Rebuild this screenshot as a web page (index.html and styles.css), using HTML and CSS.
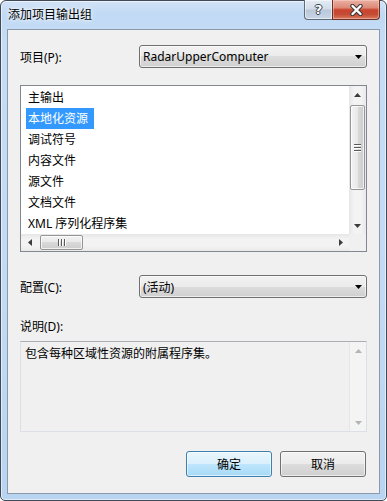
FILE: index.html
```html
<!DOCTYPE html>
<html lang="zh-CN">
<head>
    <meta charset="UTF-8">
    <meta name="viewport" content="width=device-width, initial-scale=1.0">
    <title>添加项目输出组</title>
    <link rel="stylesheet" href="styles.css">
</head>
<body>
    <div class="window">
        <div class="titlebar">
            <div class="title">添加项目输出组</div>
            <div class="caption">
                <div class="cap help"><span>?</span></div>
                <div class="cap close">
                    <svg width="13" height="12" viewBox="0 0 13 12">
                        <path d="M2.5 2 L10.5 10 M10.5 2 L2.5 10" stroke="#3b3b3b" stroke-width="4.4" stroke-linecap="round"/>
                        <path d="M2.5 2 L10.5 10 M10.5 2 L2.5 10" stroke="#fff" stroke-width="2.4" stroke-linecap="round"/>
                    </svg>
                </div>
            </div>
        </div>

        <div class="client">
            <div class="row">
                <div class="label">项目(P):</div>
                <div class="combo">
                    <span>RadarUpperComputer</span>
                    <svg width="7" height="4" viewBox="0 0 7 4"><path d="M0 0H7L3.5 4Z" fill="#000"/></svg>
                </div>
            </div>

            <div class="listbox">
                <ul class="items">
                    <li><span>主输出</span></li>
                    <li><span class="selected">本地化资源</span></li>
                    <li><span>调试符号</span></li>
                    <li><span>内容文件</span></li>
                    <li><span>源文件</span></li>
                    <li><span>文档文件</span></li>
                    <li><span>XML 序列化程序集</span></li>
                </ul>
                <div class="vscroll">
                    <div class="sbtn"><svg width="7" height="4" viewBox="0 0 7 4"><path d="M0 4H7L3.5 0Z" fill="#3c3c3c"/></svg></div>
                    <div class="vthumb"><i></i><i></i><i></i></div>
                    <div class="spacer"></div>
                    <div class="sbtn"><svg width="7" height="4" viewBox="0 0 7 4"><path d="M0 0H7L3.5 4Z" fill="#3c3c3c"/></svg></div>
                </div>
                <div class="hscroll">
                    <div class="sbtn"><svg width="4" height="7" viewBox="0 0 4 7"><path d="M4 0V7L0 3.5Z" fill="#3c3c3c"/></svg></div>
                    <div class="hthumb"><i></i><i></i><i></i></div>
                    <div class="spacer"></div>
                    <div class="sbtn"><svg width="4" height="7" viewBox="0 0 4 7"><path d="M0 0V7L4 3.5Z" fill="#3c3c3c"/></svg></div>
                </div>
                <div class="corner"></div>
            </div>

            <div class="row row-config">
                <div class="label">配置(C):</div>
                <div class="combo">
                    <span>(活动)</span>
                    <svg width="7" height="4" viewBox="0 0 7 4"><path d="M0 0H7L3.5 4Z" fill="#000"/></svg>
                </div>
            </div>

            <div class="label desc-label">说明(D):</div>
            <div class="descbox">
                <div class="desc-text">包含每种区域性资源的附属程序集。</div>
                <div class="vscroll disabled">
                    <div class="sbtn"><svg width="7" height="4" viewBox="0 0 7 4"><path d="M0 4H7L3.5 0Z" fill="#b4b4b4"/></svg></div>
                    <div class="spacer"></div>
                    <div class="sbtn"><svg width="7" height="4" viewBox="0 0 7 4"><path d="M0 0H7L3.5 4Z" fill="#b4b4b4"/></svg></div>
                </div>
            </div>

            <div class="buttons">
                <button class="btn default">确定</button>
                <button class="btn">取消</button>
            </div>
        </div>
    </div>
</body>
</html>
```

FILE: styles.css
```css
* {
    box-sizing: border-box;
}

body {
    margin: 0;
    background: #ffffff;
    font-family: "Noto Sans", "Noto Sans CJK SC", sans-serif;
    font-size: 12px;
    color: #000;
}

.window {
    width: 387px;
    height: 501px;
    border: 1px solid #3f4a56;
    border-radius: 6px 6px 5px 5px;
    background: linear-gradient(#d2e3f6 0, #c0d9f4 14px, #c6ddf6 40px, #c2daf4 300px, #b9d4f1 100%);
    box-shadow: inset 0 0 0 1px rgba(255, 255, 255, 0.55);
    padding: 0 6px 6px;
    display: flex;
    flex-direction: column;
}

/* title bar */
.titlebar {
    height: 28px;
    display: flex;
    align-items: flex-start;
}
.title {
    padding: 6px 0 0 1px;
    line-height: 16px;
    text-shadow: 0 0 6px #fff, 0 0 3px #fff;
}
.caption {
    display: flex;
    margin: -1px 0 0 auto;
}
.cap {
    height: 20px;
    display: flex;
    align-items: center;
    justify-content: center;
    border: 1px solid #5e6b7b;
    border-top: none;
}
.help {
    width: 28px;
    border-radius: 0 0 0 4px;
    border-right: none;
    background: linear-gradient(#e4ebf3, #d3dde9 45%, #bac8d9 55%, #c8d6e6);
    box-shadow: inset 0 0 0 1px rgba(255, 255, 255, 0.5);
}
.help span {
    font-family: "DejaVu Sans", sans-serif;
    font-weight: bold;
    font-size: 13px;
    line-height: 1;
    color: #fff;
    text-shadow: 1px 0 #34404e, -1px 0 #34404e, 0 1px #34404e, 0 -1px #34404e;
}
.close {
    width: 48px;
    border-radius: 0 0 4px 0;
    border-color: #6b3026;
    background: linear-gradient(#eab1a4, #de8a78 40%, #c8452f 52%, #c54a33 75%, #d8795f);
    box-shadow: inset 0 0 0 1px rgba(255, 220, 210, 0.45);
}

/* client area */
.client {
    flex: 1;
    border: 1px solid #8b9aab;
    background: #f0f0f0;
    padding: 15px 12px 16px 12px;
    display: flex;
    flex-direction: column;
}

.row {
    display: grid;
    grid-template-columns: 119px 1fr;
    align-items: center;
}
.row-config {
    margin-top: 23px;
}
.label {
    line-height: 16px;
    padding: 2px 0 0 0;
}

.combo {
    height: 23px;
    border: 1px solid #707070;
    border-radius: 3px;
    background: linear-gradient(#f2f2f2, #ebebeb 50%, #dddddd 50%, #cfcfcf);
    box-shadow: inset 0 0 0 1px rgba(255, 255, 255, 0.6);
    display: flex;
    align-items: center;
    justify-content: space-between;
    padding: 0 4px 0 3px;
}

/* list box */
.listbox {
    margin-top: 17px;
    height: 167px;
    border: 1px solid #828790;
    background: #fff;
    display: grid;
    grid-template-columns: 1fr 17px;
    grid-template-rows: 1fr 17px;
}
.items {
    list-style: none;
    margin: 0;
    padding: 1px 0 0 5px;
    overflow: hidden;
}
.items li {
    height: 21px;
    line-height: 21px;
    white-space: nowrap;
}
.items span {
    display: inline-block;
    padding: 0 6px 0 2px;
}
.items .selected {
    background: #3399ff;
    color: #fff;
}

.vscroll {
    display: flex;
    flex-direction: column;
    background: linear-gradient(90deg, #e6e6e6, #f3f3f3 30%, #f3f3f3 70%, #e9e9e9);
}
.hscroll {
    display: flex;
    background: linear-gradient(#e6e6e6, #f3f3f3 30%, #f3f3f3 70%, #e9e9e9);
}
.sbtn {
    width: 17px;
    height: 17px;
    flex: none;
    display: flex;
    align-items: center;
    justify-content: center;
}
.spacer {
    flex: 1;
}
.vthumb,
.hthumb {
    border: 1px solid #959595;
    border-radius: 2px;
    box-shadow: inset 0 0 0 1px rgba(255, 255, 255, 0.7);
    display: flex;
    align-items: center;
    justify-content: center;
    gap: 1px;
}
.vthumb {
    height: 85px;
    margin: 2px 1px 0 1px;
    flex-direction: column;
    background: linear-gradient(90deg, #f3f3f3, #e8e8e8 50%, #d9d9d9 50%, #cdcdcd);
}
.vthumb i {
    width: 7px;
    height: 1px;
    background: #5a5a5a;
    box-shadow: 0 1px #fff;
    margin-bottom: 1px;
}
.hthumb {
    width: 43px;
    margin: 1px 0 1px 2px;
    background: linear-gradient(#f3f3f3, #e8e8e8 50%, #d9d9d9 50%, #cdcdcd);
}
.hthumb i {
    width: 1px;
    height: 7px;
    background: #5a5a5a;
    box-shadow: 1px 0 #fff;
    margin-right: 1px;
}
.corner {
    background: #f0f0f0;
}

/* description */
.desc-label {
    margin-top: 21px;
    padding: 0;
}
.descbox {
    margin-top: 6px;
    height: 91px;
    border: 1px solid #dcdfe5;
    border-top-color: #abadb3;
    background: #f0f0f0;
    display: grid;
    grid-template-columns: 1fr 17px;
}
.desc-text {
    padding: 4px 0 0 4px;
    line-height: 16px;
}
.vscroll.disabled {
    background: #f4f4f4;
    border-left: 1px solid #e6e6e6;
}

/* buttons */
.buttons {
    margin-top: 19px;
    display: flex;
    justify-content: flex-end;
    gap: 8px;
    padding-right: 1px;
}
.btn {
    width: 86px;
    height: 26px;
    border: 1px solid #707070;
    border-radius: 3px;
    background: linear-gradient(#f2f2f2, #ebebeb 50%, #dddddd 50%, #cfcfcf);
    box-shadow: inset 0 0 0 1px rgba(255, 255, 255, 0.6);
    font-family: inherit;
    font-size: 12px;
    color: #000;
    padding: 0;
}
.btn.default {
    border-color: #3c7fb1;
    background: linear-gradient(#eaf6fd, #d9f0fc 50%, #bee6fd 50%, #a7d9f5);
}
```
